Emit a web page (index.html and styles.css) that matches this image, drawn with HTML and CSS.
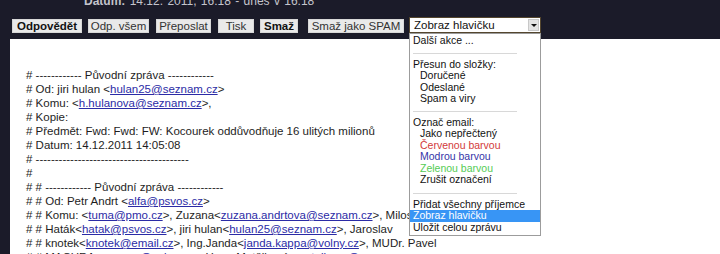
FILE: index.html
```html
<!DOCTYPE HTML>
<html>
<head>
    <title>Zpráva</title>
    <meta charset="utf-8">
    <link rel="stylesheet" href="styles.css">
</head>
<body>
    <div class="head">
        <b>Datum:</b> 14.12. 2011, 16:18 - dnes v 16:18
    </div>
    <div class="toolbar">
        <a href="#" class="btn bold w-reply">Odpovědět</a>
        <a href="#" class="btn w-all">Odp. všem</a>
        <a href="#" class="btn w-fwd">Přeposlat</a>
        <a href="#" class="btn w-print">Tisk</a>
        <a href="#" class="btn bold w-del">Smaž</a>
        <a href="#" class="btn w-spam">Smaž jako SPAM</a>
        <div class="select">
            <span class="value">Zobraz hlavičku</span>
            <span class="arrow"></span>
            <div class="list">
                <p>Další akce ...</p>
                <hr>
                <p>Přesun do složky:</p>
                <p class="sub">Doručené</p>
                <p class="sub">Odeslané</p>
                <p class="sub">Spam a viry</p>
                <hr>
                <p>Označ email:</p>
                <p class="sub">Jako nepřečtený</p>
                <p class="sub red">Červenou barvou</p>
                <p class="sub blue">Modrou barvou</p>
                <p class="sub green">Zelenou barvou</p>
                <p class="sub">Zrušit označení</p>
                <hr>
                <p>Přidat všechny příjemce</p>
                <p class="selected">Zobraz hlavičku</p>
                <p>Uložit celou zprávu</p>
            </div>
        </div>
    </div>
    <div class="message">
        <p># ------------ Původní zpráva ------------</p>
        <p># Od: jiri hulan &lt;<a href="#">hulan25@seznam.cz</a>&gt;</p>
        <p># Komu: &lt;<a href="#">h.hulanova@seznam.cz</a>&gt;,</p>
        <p># Kopie:</p>
        <p># Předmět: Fwd: Fwd: FW: Kocourek oddůvodňuje 16 ulitých milionů</p>
        <p># Datum: 14.12.2011 14:05:08</p>
        <p># ----------------------------------------</p>
        <p>#</p>
        <p># # ------------ Původní zpráva ------------</p>
        <p># # Od: Petr Andrt &lt;<a href="#">alfa@psvos.cz</a>&gt;</p>
        <p># # Komu: &lt;<a href="#">tuma@pmo.cz</a>&gt;, Zuzana&lt;<a href="#">zuzana.andrtova@seznam.cz</a>&gt;, Milosl</p>
        <p># # Haták&lt;<a href="#">hatak@psvos.cz</a>&gt;, jiri hulan&lt;<a href="#">hulan25@seznam.cz</a>&gt;, Jaroslav</p>
        <p># # knotek&lt;<a href="#">knotek@email.cz</a>&gt;, Ing.Janda&lt;<a href="#">janda.kappa@volny.cz</a>&gt;, MUDr. Pavel</p>
        <p># # MACURA&lt;<a href="#">macura@volny.cz</a>&gt;, Hana Matějková&lt;<a href="#">matejkova@seznam.cz</a>&gt;</p>
    </div>
</body>
</html>
```

FILE: styles.css
```css
body
{
    margin: 0;
    background: #1b1b29;
    font-family: "Liberation Sans", Arial, sans-serif;
    font-size: 12px;
    overflow: hidden;
}

div.head
{
    height: 8px;
    line-height: 12px;
    margin-top: -5px;
    padding-left: 84px;
    color: #c4c4cc;
    font-size: 12px;
    word-spacing: 1px;
}

div.toolbar
{
    display: flex;
    align-items: flex-end;
    gap: 6px;
    height: 16px;
    margin-top: 14px;
    padding-left: 12px;
}

a.btn
{
    display: block;
    box-sizing: border-box;
    height: 14px;
    line-height: 12px;
    border: 1px solid #d8d8d8;
    background: #e9e9e9;
    color: #333;
    text-align: center;
    text-decoration: none;
    font-size: 11.5px;
}

a.bold { font-weight: bold; color: #111; }

a.w-reply { width: 70px; }
a.w-all { width: 61px; }
a.w-fwd { width: 55px; margin-left: 1px; }
a.w-print { width: 36px; margin-left: 1px; }
a.w-del { width: 38px; }
a.w-spam { width: 96px; margin-left: 4px; }

div.select
{
    position: relative;
    box-sizing: border-box;
    width: 132px;
    height: 16px;
    margin-left: -1px;
    border: 1px solid #54462e;
    background: #fff;
}

div.select span.value
{
    display: block;
    padding-left: 4px;
    line-height: 14px;
    font-size: 11.5px;
    color: #111;
}

div.select span.arrow
{
    position: absolute;
    top: 1px;
    right: 1px;
    width: 11px;
    height: 12px;
    background: #e4e4e4;
    border: 1px solid #c8c8c8;
    box-sizing: border-box;
}

div.select span.arrow::after
{
    content: "";
    position: absolute;
    left: 2px;
    top: 4px;
    border-left: 3px solid transparent;
    border-right: 3px solid transparent;
    border-top: 3px solid #111;
}

div.list
{
    position: absolute;
    top: 15px;
    left: -1px;
    width: 130px;
    padding: 1px 0 2px;
    border: 1px solid #9c9c9c;
    background: #fff;
    z-index: 2;
}

div.list p
{
    margin: 0;
    padding-left: 3px;
    line-height: 11.5px;
    font-size: 10.5px;
    color: #111;
    white-space: nowrap;
}

div.list p.sub { padding-left: 10px; }
div.list p.red { color: #d23a3a; }
div.list p.blue { color: #3535a8; }
div.list p.green { color: #55cc55; }

div.list p.selected
{
    background: #3895f5;
    color: #fff;
}

div.list hr
{
    width: 104px;
    height: 1px;
    margin: 6px 0 5px 3px;
    border: 0;
    background: #d8d8d8;
}

div.list hr:last-of-type { margin-top: 7px; }

div.message
{
    margin: 6px 0 0 10px;
    padding: 29px 0 0 16px;
    height: 300px;
    background: #fff;
}

div.message p
{
    margin: 0;
    line-height: 14px;
    font-size: 11.5px;
    color: #1e1e1e;
    white-space: nowrap;
}

div.message a
{
    color: #2b2ba6;
    text-decoration: underline;
}
```
